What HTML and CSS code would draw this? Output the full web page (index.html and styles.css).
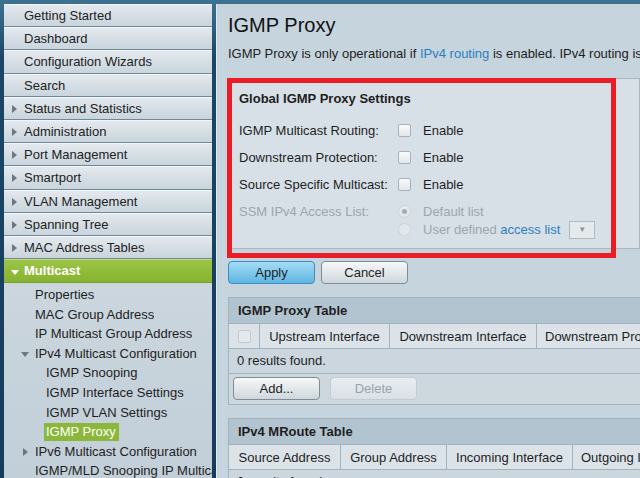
FILE: index.html
```html
<!DOCTYPE html>
<html>
<head>
<meta charset="utf-8">
<title>IGMP Proxy</title>
<link rel="stylesheet" href="styles.css">
</head>
<body>
<div class="frame">

<!-- left navigation tree -->
<div class="nav">
  <div class="nav-item">Getting Started</div>
  <div class="nav-item">Dashboard</div>
  <div class="nav-item">Configuration Wizards</div>
  <div class="nav-item">Search</div>
  <div class="nav-item closed">Status and Statistics</div>
  <div class="nav-item closed">Administration</div>
  <div class="nav-item closed">Port Management</div>
  <div class="nav-item closed">Smartport</div>
  <div class="nav-item closed">VLAN Management</div>
  <div class="nav-item closed">Spanning Tree</div>
  <div class="nav-item closed">MAC Address Tables</div>
  <div class="nav-item open">Multicast</div>
  <div class="nav-sub">
    <div class="sub l1">Properties</div>
    <div class="sub l1">MAC Group Address</div>
    <div class="sub l1">IP Multicast Group Address</div>
    <div class="sub l1 down">IPv4 Multicast Configuration</div>
    <div class="sub l2">IGMP Snooping</div>
    <div class="sub l2">IGMP Interface Settings</div>
    <div class="sub l2">IGMP VLAN Settings</div>
    <div class="sub l2"><span class="current">IGMP Proxy</span></div>
    <div class="sub l1 right">IPv6 Multicast Configuration</div>
    <div class="sub l1">IGMP/MLD Snooping IP Multicast Group</div>
  </div>
</div>

<!-- page body -->
<div class="main">
  <h1 class="title">IGMP Proxy</h1>
  <p class="info">IGMP Proxy is only operational if <a href="#">IPv4 routing</a> is enabled. IPv4 routing is currently disabled.</p>

  <div class="marked">
    <div class="panel settings">
      <div class="panel-title">Global IGMP Proxy Settings</div>
      <div class="row">
        <span class="label">IGMP Multicast Routing:</span>
        <span class="check"></span><span>Enable</span>
      </div>
      <div class="row">
        <span class="label">Downstream Protection:</span>
        <span class="check"></span><span>Enable</span>
      </div>
      <div class="row">
        <span class="label">Source Specific Multicast:</span>
        <span class="check"></span><span>Enable</span>
      </div>
      <div class="row off first">
        <span class="label">SSM IPv4 Access List:</span>
        <span class="radio on"></span><span>Default list</span>
      </div>
      <div class="row off second">
        <span class="label"></span>
        <span class="radio"></span><span>User defined <a href="#">access list</a></span>
        <span class="select">&#9660;</span>
      </div>
    </div>
  </div>

  <div class="buttons">
    <button class="btn primary">Apply</button>
    <button class="btn">Cancel</button>
  </div>

  <div class="table-box">
    <div class="table-head">IGMP Proxy Table</div>
    <div class="cols">
      <div class="col" style="width:31px"><span class="check faint"></span></div>
      <div class="col" style="width:130px">Upstream Interface</div>
      <div class="col" style="width:147px">Downstream Interface</div>
      <div class="col last">Downstream Protection</div>
    </div>
    <div class="results">0 results found.</div>
    <div class="table-actions">
      <button class="btn">Add...</button>
      <button class="btn" disabled>Delete</button>
    </div>
  </div>

  <div class="table-box">
    <div class="table-head">IPv4 MRoute Table</div>
    <div class="cols">
      <div class="col" style="width:112px">Source Address</div>
      <div class="col" style="width:106px">Group Address</div>
      <div class="col" style="width:126px">Incoming Interface</div>
      <div class="col last">Outgoing Interface</div>
    </div>
    <div class="results">0 results found.</div>
  </div>
</div>

</div>
</body>
</html>
```

FILE: styles.css
```css
body {
  margin: 0;
  height: 478px;
  overflow: hidden;
  background: linear-gradient(#3d7391, #1c4566 60px, #163c5c);
  font: 13px "Liberation Sans", Arial, sans-serif;
  color: #1e1e1e;
}

.frame {
  display: flex;
  gap: 4px;
  padding: 4px 0 0 4px;
  height: 474px;
}

/* ---- navigation ---- */
.nav {
  width: 208px;
  flex: none;
  display: flex;
  flex-direction: column;
}

.nav-item {
  height: 21.2px;
  line-height: 21.2px;
  padding-left: 20px;
  font-size: 13px;
  color: #222;
  background: linear-gradient(#e3e9ee, #c9d4dc);
  border-top: 1px solid #f3f6f8;
  border-bottom: 1px solid #6f899c;
  position: relative;
  flex: none;
}

.nav-item.closed::before {
  content: "";
  position: absolute;
  left: 8px;
  top: 7px;
  border-left: 5px solid #6d7780;
  border-top: 4px solid transparent;
  border-bottom: 4px solid transparent;
}

.nav-item.open {
  height: 22px;
  line-height: 22px;
  background: linear-gradient(#9cc545, #86b330);
  border-top-color: #b9d97c;
  border-bottom-color: #7aa22a;
  color: #fff;
  font-weight: bold;
}

.nav-item.open::before {
  content: "";
  position: absolute;
  left: 7px;
  top: 10px;
  border-top: 5px solid #fff;
  border-left: 4px solid transparent;
  border-right: 4px solid transparent;
}

.nav-sub {
  flex: 1;
  background: linear-gradient(#cbd6de, #c2cfd8);
  padding-top: 2px;
  white-space: nowrap;
  overflow: hidden;
}

.sub {
  height: 19.6px;
  line-height: 19.6px;
  position: relative;
}

.sub.l1 { padding-left: 31px; }
.sub.l2 { padding-left: 42px; }

.sub.down::before {
  content: "";
  position: absolute;
  left: 17px;
  top: 8px;
  border-top: 5px solid #6d7780;
  border-left: 4px solid transparent;
  border-right: 4px solid transparent;
}

.sub.right::before {
  content: "";
  position: absolute;
  left: 19px;
  top: 6px;
  border-left: 5px solid #6d7780;
  border-top: 4px solid transparent;
  border-bottom: 4px solid transparent;
}

.current {
  display: inline-block;
  background: #8bb83a;
  color: #fff;
  line-height: 18px;
  padding: 0 3px 0 2px;
  margin-left: -2px;
}

/* ---- page body ---- */
.main {
  flex: 1;
  background: #c6d4dd;
  border-left: 1px solid #e0e8ed;
  padding: 8px 0 0 11px;
  overflow: hidden;
  white-space: nowrap;
}

.title {
  margin: 0;
  font-size: 20px;
  font-weight: normal;
  line-height: 26px;
  color: #111;
}

.info {
  margin: 8px 0 0;
  line-height: 16px;
}

a {
  color: #2c7fbf;
  text-decoration: none;
}

/* red annotation frame laid over the settings panel */
.marked {
  position: relative;
  margin-top: 16px;
  padding-bottom: 12px;
}

.marked::after {
  content: "";
  position: absolute;
  left: -1px;
  top: 0;
  width: 379px;
  height: 170px;
  border: 5px solid #e81d25;
}

.panel {
  background: #d7e0e6;
  border: 1px solid #a9b7c1;
}

.settings {
  height: 169px;
  padding: 0 0 0 10px;
}

.panel-title {
  font-weight: bold;
  margin-top: 12px;
  line-height: 15px;
  margin-bottom: 11px;
}

.row {
  display: flex;
  align-items: center;
  height: 27px;
}

.row.first { height: 27px; }
.row.second { height: 9px; }

.row.off { color: #9ba6ae; }

.label { width: 159px; }

.check {
  width: 11px;
  height: 11px;
  border: 1px solid #a8b1b8;
  border-radius: 2px;
  background: linear-gradient(#fafbfc, #e2e7ea);
  margin-right: 12px;
  display: inline-block;
}

.check.faint {
  border-color: #c3cbd1;
  background: #e3e9ed;
  margin: 0;
}

.radio {
  width: 11px;
  height: 11px;
  border: 1px solid #ccd3d8;
  border-radius: 50%;
  background: #e2e8ec;
  margin-right: 12px;
  position: relative;
}

.radio.on::after {
  content: "";
  position: absolute;
  left: 3px;
  top: 3px;
  width: 5px;
  height: 5px;
  border-radius: 50%;
  background: #a4adb3;
}

.select {
  width: 24px;
  height: 16px;
  border: 1px solid #b0b9bf;
  background: #e5eaed;
  color: #8a949b;
  font-size: 8px;
  text-align: center;
  line-height: 16px;
  margin-left: 9px;
}

.buttons {
  display: flex;
  gap: 6px;
}

.btn {
  width: 87px;
  height: 23px;
  border: 1px solid #7f8c95;
  border-radius: 4px;
  background: linear-gradient(#f6f8f9, #cfd7dc);
  font: 13px "Liberation Sans", Arial, sans-serif;
  color: #1e1e1e;
  padding: 0;
}

.btn.primary {
  border-color: #3b8dbf;
  background: linear-gradient(#a5dcf5, #5fb6e3);
}

.btn:disabled {
  border-color: #c3ccd2;
  background: linear-gradient(#e8edf0, #dae1e6);
  color: #9aa4ab;
}

.table-box {
  margin-top: 13px;
  border: 1px solid #a3b3be;
  border-right: none;
  background: #cdd8df;
}

.table-head {
  height: 25px;
  line-height: 25px;
  padding-left: 9px;
  font-weight: bold;
  background: #b3c4d1;
  border-bottom: 1px solid #a3b3be;
}

.cols {
  display: flex;
  height: 24px;
  border-bottom: 1px solid #a3b3be;
}

.col {
  flex: none;
  display: flex;
  align-items: center;
  justify-content: center;
  background: #dbe3e9;
  border-right: 1px solid #a3b3be;
  box-sizing: border-box;
}

.col.last {
  flex: 1;
  justify-content: flex-start;
  padding-left: 8px;
  border-right: none;
}

.results {
  height: 24px;
  line-height: 24px;
  padding-left: 8px;
  background: #cbd6de;
  border-bottom: 1px solid #a3b3be;
}

.table-actions {
  display: flex;
  gap: 10px;
  padding: 3px 0 4px 4px;
  background: #cdd7de;
}
```
